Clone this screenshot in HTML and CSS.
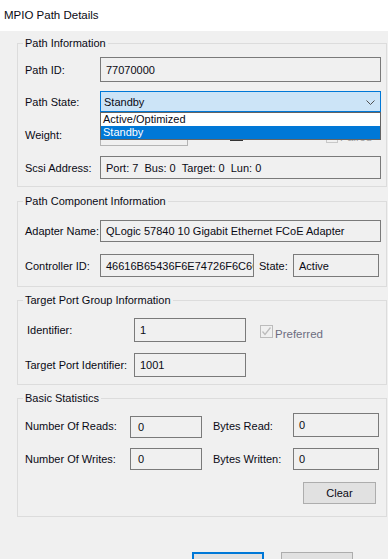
FILE: index.html
```html
<!DOCTYPE html>
<html>
<head>
    <title>MPIO Path Details</title>
    <link rel="stylesheet" href="styles.css">
</head>
<body>
    <div class="titlebar">MPIO Path Details</div>

    <div class="content">
        <fieldset class="group g-path">
            <legend>Path Information</legend>
            <div class="row r-id">
                <span class="lbl">Path ID:</span>
                <div class="field grow">77070000</div>
            </div>
            <div class="row r-state">
                <span class="lbl">Path State:</span>
                <div class="combo">
                    <span>Standby</span>
                    <svg class="chev" width="9" height="5" viewBox="0 0 9 5"><polyline points="0.5,0.5 4.5,4.5 8.5,0.5" fill="none" stroke="#505050" stroke-width="1"/></svg>
                    <ul class="droplist">
                        <li>Active/Optimized</li>
                        <li class="sel">Standby</li>
                    </ul>
                </div>
            </div>
            <div class="row r-weight">
                <span class="lbl">Weight:</span>
                <div class="field light w-weight"></div>
                <span class="ghost-bar"></span>
                <span class="ghost-box"></span>
                <span class="ghost-text">Paired</span>
            </div>
            <div class="row r-scsi">
                <span class="lbl">Scsi Address:</span>
                <div class="field grow">Port: 7&nbsp;&nbsp;Bus: 0&nbsp;&nbsp;Target: 0&nbsp;&nbsp;Lun: 0</div>
            </div>
        </fieldset>

        <fieldset class="group g-comp">
            <legend>Path Component Information</legend>
            <div class="row r-adapter">
                <span class="lbl">Adapter Name:</span>
                <div class="field grow">QLogic 57840 10 Gigabit Ethernet FCoE Adapter</div>
            </div>
            <div class="row r-ctrl">
                <span class="lbl">Controller ID:</span>
                <div class="field w-ctrl">46616B65436F6E74726F6C6C</div>
                <span class="lbl-state">State:</span>
                <div class="field w-state">Active</div>
            </div>
        </fieldset>

        <fieldset class="group g-tpg">
            <legend>Target Port Group Information</legend>
            <div class="row r-ident">
                <span class="lbl-tpg indent">Identifier:</span>
                <div class="field w-tpg">1</div>
                <span class="check">
                    <svg width="11" height="11" viewBox="0 0 11 11"><polyline points="1.5,5.5 4,8.5 9.5,1.5" fill="none" stroke="#bcbcbc" stroke-width="1.3"/></svg>
                </span>
                <span class="disabled">Preferred</span>
            </div>
            <div class="row r-tpi">
                <span class="lbl-tpg">Target Port Identifier:</span>
                <div class="field w-tpg">1001</div>
            </div>
        </fieldset>

        <fieldset class="group g-stats">
            <legend>Basic Statistics</legend>
            <div class="row r-reads">
                <span class="lbl-stat">Number Of Reads:</span>
                <div class="field w-stat low">0</div>
                <span class="lbl-bytes">Bytes Read:</span>
                <div class="field w-bytes high">0</div>
            </div>
            <div class="row r-writes">
                <span class="lbl-stat">Number Of Writes:</span>
                <div class="field w-stat">0</div>
                <span class="lbl-bytes">Bytes Written:</span>
                <div class="field w-bytes">0</div>
            </div>
            <div class="row r-clear">
                <button class="btn clear">Clear</button>
            </div>
        </fieldset>

        <div class="actions">
            <button class="btn default">OK</button>
            <button class="btn">Cancel</button>
        </div>
    </div>
</body>
</html>
```

FILE: styles.css
```css
html, body { margin: 0; height: 100%; overflow: hidden; }
body {
    background: #f0f0f0; color: #0a0a14;
    font-family: "Liberation Sans", Arial, sans-serif; font-size: 11px;
}
.titlebar {
    height: 31px; background: #fff; box-sizing: border-box;
    display: flex; align-items: center; padding: 0 0 2px 4px; font-size: 11.5px;
}
.content { padding: 4px 0 0 17px; }

/* group boxes */
.group {
    width: 370px; box-sizing: border-box; margin: 0;
    border: 1px solid #dcdcdc; padding: 0 5px 0 7px;
}
.group legend { padding: 0 2px; margin-left: -2px; line-height: 16px; }
.g-path { padding-top: 6px; padding-bottom: 7px; }
.g-comp { margin-top: 6px; padding-top: 11px; padding-bottom: 9px; }
.g-tpg { margin-top: 5px; padding-top: 10px; padding-bottom: 7px; }
.g-stats { margin-top: 5px; padding-top: 7px; padding-bottom: 12px; }

.row { display: flex; align-items: center; }
.lbl { width: 75px; flex: none; white-space: nowrap; }

.field {
    box-sizing: border-box; height: 23px; padding: 0 5px;
    border: 1px solid #7a7a7a; background: #f0f0f0;
    display: flex; align-items: center; white-space: nowrap; overflow: hidden; flex: none;
}
.field.grow { flex: 1; }
.field.light { border-color: #b4b4b4; }

/* path information */
.r-id .field { height: 25px; }
.r-state { margin-top: 9px; }
.r-weight { margin-top: 11px; align-items: flex-start; height: 23px; }
.r-weight .lbl { align-self: center; }
.r-scsi { margin-top: 10px; }
.w-weight { width: 88px; }

.combo {
    position: relative; flex: 1; height: 21px; box-sizing: border-box;
    border: 1px solid #0078d7; background: #cce4f7;
    display: flex; align-items: center; padding: 0 3px;
}
.combo .chev { position: absolute; right: 5px; top: 8px; }
.droplist {
    position: absolute; top: calc(100% + 1px); left: -1px; right: -1px;
    margin: 0; padding: 0; list-style: none;
    background: #fff; border: 1px solid #646464; z-index: 2;
}
.droplist li { height: 13px; line-height: 13px; padding-left: 2px; }
.droplist li.sel { background: #0078d7; color: #fff; }

.ghost-bar { width: 13px; height: 2px; background: #333; margin: 16px 0 0 42px; flex: none; }
.ghost-box {
    width: 10px; height: 12px; border: 1px solid #c8c8c8; margin: 6px 0 0 83px; flex: none;
}
.ghost-text { color: #a0a0a0; line-height: 14px; margin: 7px 0 0 2px; }

/* path component */
.r-ctrl { margin-top: 12px; }
.r-adapter .field { height: 22px; }
.w-ctrl { width: 154px; }
.lbl-state { margin-left: 5px; width: 34px; flex: none; }
.w-state { width: 86px; }

/* target port group */
.r-ident .field, .r-tpi .field { height: 24px; }
.r-tpi { margin-top: 11px; }
.lbl-tpg { width: 109px; flex: none; white-space: nowrap; }
.lbl-tpg.indent { box-sizing: border-box; padding-left: 2px; }
.w-tpg { width: 112px; }
.check {
    box-sizing: border-box; width: 13px; height: 13px; margin: 2px 0 0 14px;
    border: 1px solid #bcbcbc; display: flex; align-items: center; justify-content: center;
}
.disabled { color: #6d6d80; margin: 7px 0 0 2px; font-size: 11.5px; }

/* statistics */
.r-reads { height: 25px; }
.r-writes { margin-top: 10px; height: 22px; }
.lbl-stat { width: 105px; flex: none; white-space: nowrap; }
.lbl-bytes { width: 80px; margin-left: 11px; flex: none; white-space: nowrap; }
.w-stat { width: 72px; padding-left: 7px; height: 22px; }
.w-bytes { width: 86px; height: 22px; }
.field.low { align-self: flex-end; }
.field.high { align-self: flex-start; height: 24px; }
.r-clear { margin-top: 12px; justify-content: flex-end; padding-right: 5px; }

.btn {
    font: inherit; color: #0a0a14; background: #e1e1e1;
    border: 1px solid #adadad; box-sizing: border-box; padding: 0;
    width: 73px; height: 22px;
}
.actions { display: flex; margin-top: 35px; padding-left: 175px; gap: 17px; }
.actions .btn { width: 72px; height: 23px; }
.actions .btn.default { border: 2px solid #0078d7; }
```
